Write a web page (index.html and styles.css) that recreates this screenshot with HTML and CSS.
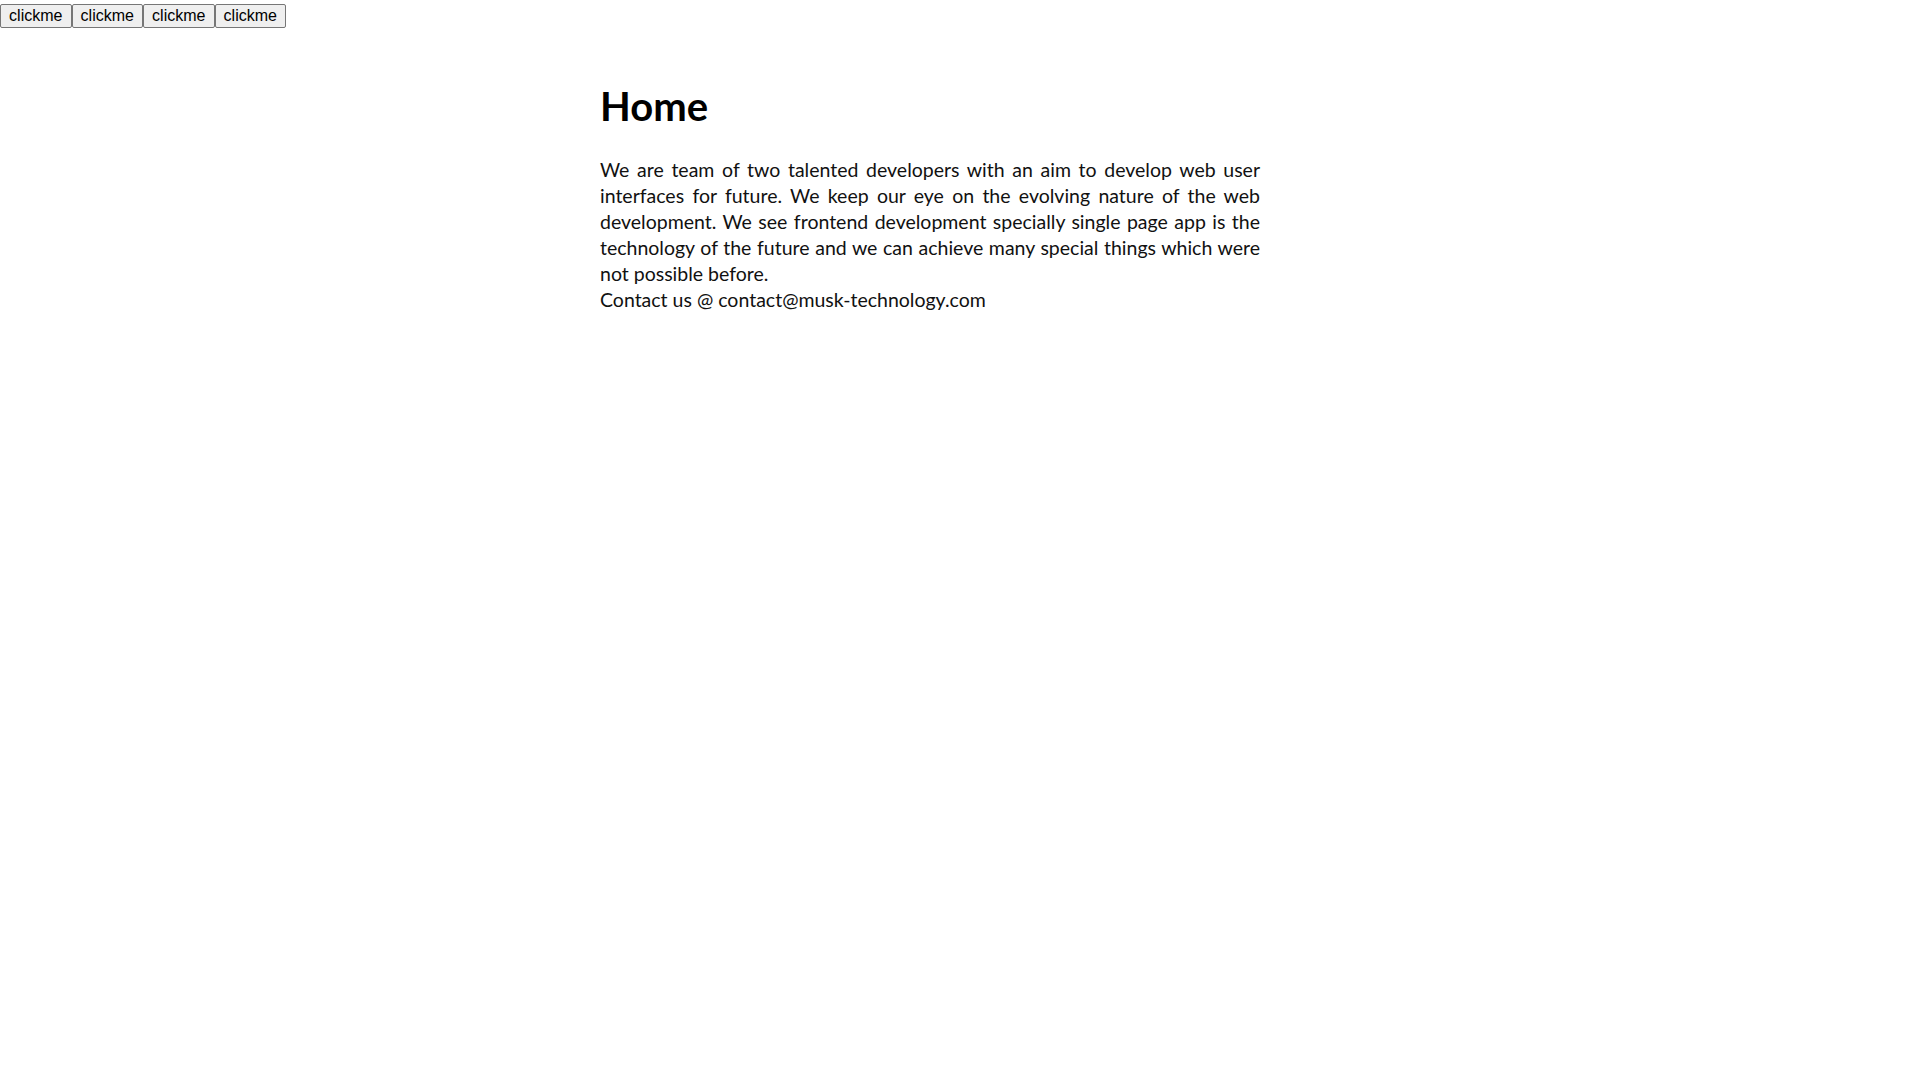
FILE: index.html
```html
<!DOCTYPE html>
<html>
<head>
<meta charset="utf-8">
<title>Home</title>
<link rel="stylesheet" href="styles.css">
</head>
<body>
<nav class="nav">
  <button class="btn">clickme</button><button class="btn">clickme</button><button class="btn">clickme</button><button class="btn">clickme</button>
</nav>
<main class="page">
  <h1 class="title">Home</h1>
  <p class="text">We are team of two talented developers with an aim to develop web user interfaces for future. We keep our eye on the evolving nature of the web development. We see frontend development specially single page app is the technology of the future and we can achieve many special things which were not possible before.</p>
  <div class="contact">Contact us @ contact@musk-technology.com</div>
</main>
</body>
</html>
```
FILE: styles.css
```css
html, body {
  margin: 0;
  padding: 0;
  background: #fff;
}
.nav {
  display: flex;
  padding-top: 4px;
}
.btn {
  font-family: "Liberation Sans", Arial, sans-serif;
  font-size: 16px;
  color: #000;
  background: #efefef;
  border: 1px solid #767676;
  border-radius: 2px;
  padding: 1px 6px;
  width: 71.5px;
  height: 24px;
  line-height: 20px;
  margin: 0;
}
.page {
  width: 660px;
  margin-left: 600px;
  font-family: Lato, "Open Sans", sans-serif;
  color: #111;
}
.title {
  font-size: 40px;
  font-weight: 700;
  margin: 52px 0 0 0;
  line-height: 52px;
  color: #000;
}
.text {
  font-size: 19.5px;
  line-height: 26px;
  text-align: justify;
  margin: 25px 0 0 0;
}
.contact {
  font-size: 19.5px;
  line-height: 26px;
}
```
